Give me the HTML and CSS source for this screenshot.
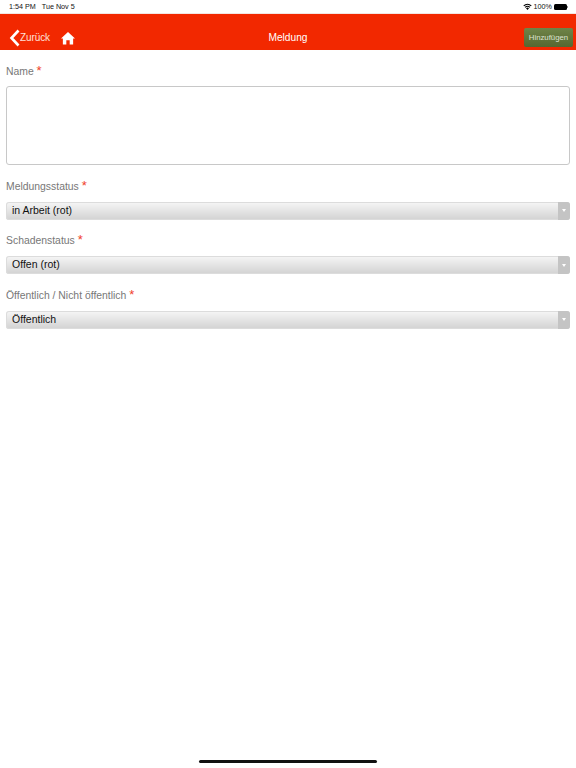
FILE: index.html
```html
<!DOCTYPE html>
<html lang="de">
<head>
    <meta charset="UTF-8">
    <meta name="viewport" content="width=device-width, initial-scale=1.0">
    <title>Meldung</title>
    <link rel="stylesheet" href="styles.css">
</head>
<body>

<div class="status-bar">
  <div class="status-left">
    <span>1:54 PM</span>
    <span>Tue Nov 5</span>
  </div>
  <div class="status-right">
    <svg class="wifi" width="9" height="7" viewBox="0 0 20 15">
      <path d="M10 15 L6.6 11.4 A5 5 0 0 1 13.4 11.4 Z" fill="#000"/>
      <path d="M4.6 9.3 A8 8 0 0 1 15.4 9.3" fill="none" stroke="#000" stroke-width="2.4"/>
      <path d="M1.6 6 A12.4 12.4 0 0 1 18.4 6" fill="none" stroke="#000" stroke-width="2.4"/>
    </svg>
    <span>100%</span>
    <div class="battery"></div>
    <div class="battery-tip"></div>
  </div>
</div>

<div class="nav-bar">
  <div class="nav-left">
    <a class="back-link">
      <svg width="11" height="18" viewBox="0 0 11 18">
        <path d="M9.5 1.5 L2.5 9 L9.5 16.5" fill="none" stroke="#fff" stroke-width="2.6"/>
      </svg>
      <span>Zurück</span>
    </a>
    <svg class="home-icon" width="14" height="14" viewBox="0 0 15 14">
      <path d="M7.5 0.5 L15 7.5 L13 7.5 L13 14 L9.3 14 L9.3 9.5 L5.7 9.5 L5.7 14 L2 14 L2 7.5 L0 7.5 Z" fill="#fff"/>
    </svg>
  </div>
  <div class="nav-title">Meldung</div>
  <button class="add-button">Hinzufügen</button>
</div>

<form class="form-container">
  <div class="form-group">
    <label>Name <span class="required">*</span></label>
    <div class="text-area"></div>
  </div>

  <div class="form-group">
    <label>Meldungsstatus <span class="required">*</span></label>
    <div class="select-box">
      <span class="select-text">in Arbeit (rot)</span>
      <span class="select-arrow"></span>
    </div>
  </div>

  <div class="form-group">
    <label>Schadenstatus <span class="required">*</span></label>
    <div class="select-box">
      <span class="select-text">Offen (rot)</span>
      <span class="select-arrow"></span>
    </div>
  </div>

  <div class="form-group">
    <label>Öffentlich / Nicht öffentlich <span class="required">*</span></label>
    <div class="select-box">
      <span class="select-text">Öffentlich</span>
      <span class="select-arrow"></span>
    </div>
  </div>
</form>

<div class="home-indicator"></div>

</body>
</html>
```

FILE: styles.css
```css
html, body {
  height: 100%;
}

body {
  font-family: 'Liberation Sans', Arial, sans-serif;
  background: white;
  margin: 0;
  display: flex;
  flex-direction: column;
  overflow: hidden;
}

.status-bar {
  height: 14px;
  padding: 0 8px 0 9px;
  display: flex;
  justify-content: space-between;
  align-items: center;
  font-size: 7.2px;
  color: #111;
  box-sizing: border-box;
  border-bottom: 1px solid #f3e6e2;
}

.status-left {
  display: flex;
  gap: 6px;
}

.status-right {
  display: flex;
  align-items: center;
  gap: 2px;
}

.battery {
  width: 13px;
  height: 6px;
  background: #000;
  border-radius: 1.5px;
}

.battery-tip {
  width: 1px;
  height: 2px;
  margin-left: -2px;
  background: #888;
}

.nav-bar {
  height: 36px;
  background: #f22800;
  display: flex;
  align-items: center;
  justify-content: space-between;
  position: relative;
  color: white;
}

.nav-left {
  display: flex;
  align-items: center;
  padding-left: 9px;
  gap: 11px;
  margin-top: 11px;
}

.back-link {
  display: flex;
  align-items: center;
  font-size: 10px;
  letter-spacing: -0.1px;
  color: #ffe0d8;
}

.home-icon {
  margin-top: 1px;
}

.nav-title {
  position: absolute;
  left: 0;
  right: 0;
  top: 18px;
  text-align: center;
  font-size: 10.2px;
}

.add-button {
  width: 49px;
  height: 19px;
  margin: 11px 3px 0 0;
  padding: 0;
  border: none;
  border-radius: 2px;
  background: linear-gradient(#6f8448, #556730);
  color: #dfe4d2;
  font-family: inherit;
  font-size: 7.8px;
}

.form-container {
  padding: 14px 6px 0;
}

.form-group {
  margin-bottom: 14.5px;
}

.form-group label {
  display: block;
  height: 14px;
  line-height: 13px;
  margin-bottom: 8px;
  color: #777;
  font-size: 10.4px;
}

.form-group:first-child label {
  line-height: 15px;
}

.required {
  color: #f0402a;
  font-size: 13px;
  line-height: 10px;
}

.text-area {
  height: 77px;
  background: white;
  border: 1px solid #c8c8c8;
  border-radius: 3px;
}

.select-box {
  height: 18px;
  display: flex;
  justify-content: space-between;
  border-radius: 3px;
  overflow: hidden;
  background: linear-gradient(#f6f6f6, #d2d2d2);
  box-shadow: inset 0 0 0 1px #dcdcdc;
}

.select-text {
  padding-left: 6px;
  line-height: 17px;
  font-size: 10.5px;
  color: #111;
}

.select-arrow {
  width: 12px;
  background: #c4c4c4;
  display: flex;
  align-items: center;
  justify-content: center;
}

.select-arrow::after {
  content: "";
  border-left: 2px solid transparent;
  border-right: 2px solid transparent;
  border-top: 3px solid white;
}

.home-indicator {
  position: absolute;
  left: 199px;
  top: 760px;
  width: 178px;
  height: 3px;
  background: #111;
  border-radius: 2px;
}
```
